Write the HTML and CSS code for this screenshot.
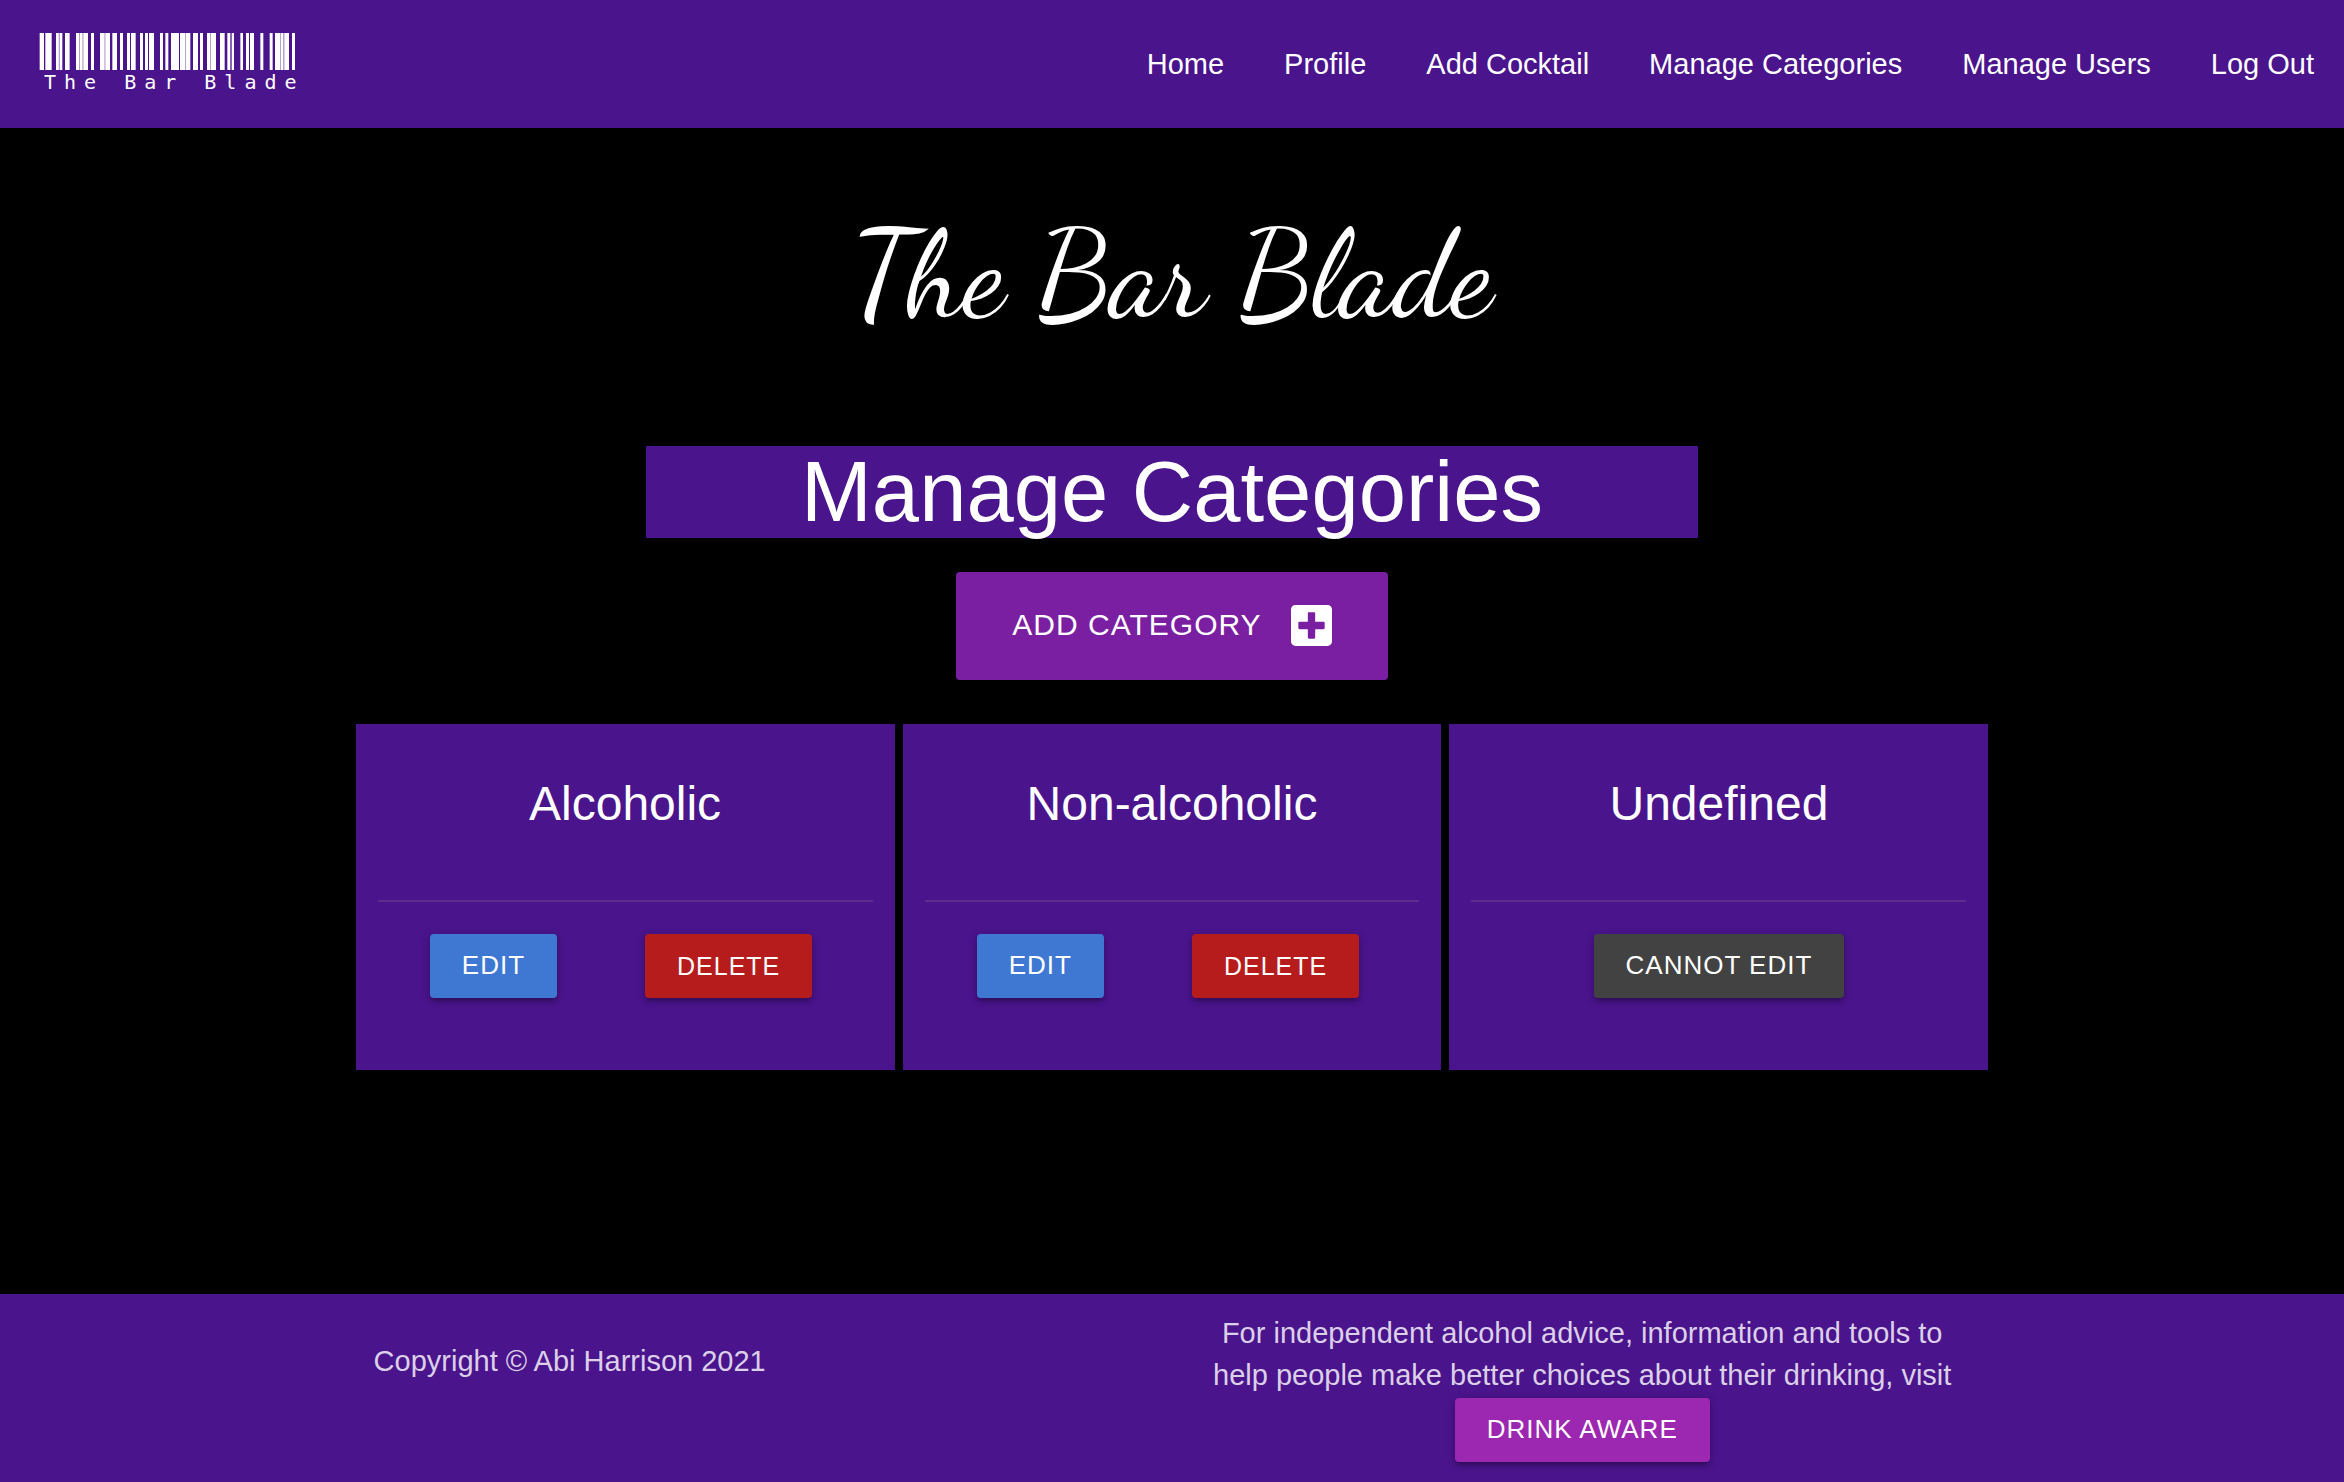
FILE: index.html
```html
<!DOCTYPE html>
<html lang="en">
<head>
<meta charset="utf-8">
<meta name="viewport" content="width=device-width, initial-scale=1">
<title>The Bar Blade</title>
<link rel="stylesheet" href="styles.css">
</head>
<body>
<header class="navbar">
  <a class="brand" href="#">
    <svg class="barcode" viewBox="57 70 771 111" preserveAspectRatio="none" fill="#fff" aria-hidden="true">
      <path opacity=".6" d="M114 70h7v111h-7zM176 70h5v111h-5zM186 70h5v111h-5zM252 70h5v111h-5zM494 70h5v111h-5zM569 70h5v111h-5zM788 70h6v111h-6zM779 70h5v111h-5z"/>
      <path d="M59 70h13v111h-13zM76 70h19v111h-19zM108 70h8v111h-8zM120 70h7v111h-7zM135 70h14v111h-14zM168 70h9v111h-9zM180 70h7v111h-7zM190 70h14v111h-14zM213 70h9v111h-9zM240 70h13v111h-13zM256 70h14v111h-14zM277 70h14v111h-14zM300 70h9v111h-9zM321 70h9v111h-9zM333 70h14v111h-14zM360 70h9v111h-9zM375 70h9v111h-9zM387 70h15v111h-15zM420 70h9v111h-9zM436 70h9v111h-9zM453 70h24v111h-24zM480 70h15v111h-15zM498 70h13v111h-13zM519 70h15v111h-15zM540 70h9v111h-9zM561 70h9v111h-9zM573 70h15v111h-15zM600 70h14v111h-14zM622 70h9v111h-9zM635 70h7v111h-7zM661 70h8v111h-8zM678 70h9v111h-9zM690 70h12v111h-12zM721 70h9v111h-9zM749 70h9v111h-9zM765 70h15v111h-15zM783 70h6v111h-6zM793 70h14v111h-14zM816 70h9v111h-9z"/>
    </svg>
    <span class="brand-name">The Bar Blade</span>
  </a>
  <nav class="menu">
    <a href="#">Home</a>
    <a href="#">Profile</a>
    <a href="#">Add Cocktail</a>
    <a href="#">Manage Categories</a>
    <a href="#">Manage Users</a>
    <a href="#">Log Out</a>
  </nav>
</header>

<main class="container main">
  <h1 class="site-title">The Bar Blade</h1>
  <h2 class="page-title">Manage Categories</h2>
  <a class="btn-large" href="#">ADD CATEGORY
    <svg class="plus" viewBox="0 32 448 448" fill="#fff" aria-hidden="true"><path d="M400 32H48C21.500 32 0 53.500 0 80v352c0 26.500 21.500 48 48 48h352c26.500 0 48-21.500 48-48V80c0-26.500-21.500-48-48-48zm-32 252c0 6.600-5.400 12-12 12h-92v92c0 6.600-5.400 12-12 12h-56c-6.600 0-12-5.400-12-12v-92H92c-6.600 0-12-5.400-12-12v-56c0-6.600 5.400-12 12-12h92v-92c0-6.600 5.400-12 12-12h56c6.600 0 12 5.400 12 12v92h92c6.600 0 12 5.400 12 12v56z"/></svg>
  </a>
  <section class="cards">
    <article class="card">
      <h3 class="card-title">Alcoholic</h3>
      <div class="card-action pair">
        <a class="btn blue" href="#">EDIT</a>
        <button class="btn red" type="button">DELETE</button>
      </div>
    </article>
    <article class="card">
      <h3 class="card-title">Non-alcoholic</h3>
      <div class="card-action pair">
        <a class="btn blue" href="#">EDIT</a>
        <button class="btn red" type="button">DELETE</button>
      </div>
    </article>
    <article class="card">
      <h3 class="card-title">Undefined</h3>
      <div class="card-action">
        <button class="btn grey" type="button">CANNOT EDIT</button>
      </div>
    </article>
  </section>
</main>

<footer class="footer">
  <div class="container footer-row">
    <p class="copyright">Copyright © Abi Harrison 2021</p>
    <div class="advice">
      <p>For independent alcohol advice, information and tools to help people make better choices about their drinking, visit</p>
      <a class="btn violet" href="#">DRINK AWARE</a>
    </div>
  </div>
</footer>
</body>
</html>
```
FILE: styles.css
```css
* {
  box-sizing: border-box;
}

body {
  margin: 0;
  min-height: 100vh;
  display: flex;
  flex-direction: column;
  background: #000;
  color: #fff;
  font-family: "Liberation Sans", Arial, sans-serif;
  font-size: 29px;
  line-height: 42px;
}

h1, h2, h3, p {
  margin: 0;
  font-weight: 400;
}

a {
  color: inherit;
  text-decoration: none;
}

.container {
  width: 70%;
  margin: 0 auto;
}

/* Navigation */
.navbar {
  display: flex;
  justify-content: space-between;
  min-height: 128px;
  background: #4a148c;
}

.brand {
  display: flex;
  flex-direction: column;
  padding: 33px 0 0 39px;
}

.barcode {
  width: 257px;
  height: 37px;
}

.brand-name {
  padding-left: 5px;
  font-family: "DejaVu Sans Mono", monospace;
  font-size: 20px;
  line-height: 24px;
  letter-spacing: 8px;
  white-space: nowrap;
}

.menu {
  display: flex;
  align-items: center;
}

.menu a {
  padding: 0 30px;
  line-height: 128px;
  white-space: nowrap;
}

/* Main */
.main {
  flex: 1;
  display: flex;
  flex-direction: column;
  align-items: center;
}

.site-title {
  padding: 85px 0 109px;
  font-family: "Dancing Script", "Liberation Serif", cursive;
  font-size: 122px;
  line-height: 124px;
}

.page-title {
  width: calc(66.666% - 42px);
  background: #4a148c;
  font-size: 85px;
  line-height: 92px;
  text-align: center;
}

.btn-large {
  display: flex;
  align-items: center;
  gap: 29px;
  margin: 34px 0 44px;
  padding: 0 56px 2px;
  border-radius: 4px;
  background: #7b1fa2;
  font-size: 30px;
  line-height: 106px;
  letter-spacing: 1px;
}

.plus {
  width: 41px;
  height: 41px;
}

.cards {
  display: grid;
  grid-template-columns: repeat(3, 1fr);
  gap: 8px;
  width: 100%;
  padding: 0 4px;
}

.card {
  padding: 48px 22px 72px;
  background: #4a148c;
  text-align: center;
}

.card-title {
  padding-bottom: 64px;
  font-size: 48px;
  line-height: 64px;
}

.card-action {
  display: flex;
  justify-content: center;
  padding-top: 32px;
  border-top: 2px solid #5b2d8c;
}

.pair {
  gap: 88px;
  padding-right: 8px;
}

.btn {
  display: inline-block;
  padding: 0 32px 2px;
  border: 0;
  border-radius: 4px;
  color: #fff;
  font-family: inherit;
  font-size: 26px;
  line-height: 62px;
  letter-spacing: 1px;
  box-shadow: 0 4px 4px rgba(0, 0, 0, .14), 0 6px 2px -4px rgba(0, 0, 0, .12), 0 2px 10px rgba(0, 0, 0, .2);
}

.blue {
  background: #3e78d2;
}

.red {
  padding-bottom: 0;
  background: #b71c1c;
  font-size: 25px;
  line-height: 64px;
}

.grey {
  background: #424242;
}

.violet {
  background: #9c27b0;
}

/* Footer */
.footer {
  background: #4a148c;
}

.footer-row {
  display: grid;
  grid-template-columns: 1fr 1fr;
  padding: 18px 0 20px;
  color: #dbd0e8;
}

.copyright {
  padding: 28px 22px;
}

.advice {
  display: flex;
  flex-direction: column;
  align-items: center;
  gap: 2px;
  padding: 0 22px;
  text-align: center;
}
```
